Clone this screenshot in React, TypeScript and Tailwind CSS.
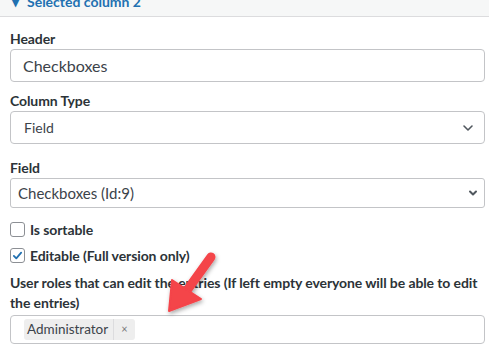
import React from 'react';

const font = { fontFamily: 'Lato, "Noto Sans", sans-serif' };

const Chevron = ({ className }: { className?: string }) => (
  <svg viewBox="0 0 16 16" className={className} fill="none" stroke="currentColor" strokeWidth="1.6" strokeLinecap="round" strokeLinejoin="round">
    <path d="M4 6l4 4 4-4" />
  </svg>
);

const App: React.FC = () => {
  return (
    <div className="relative w-[489px] h-[349px] overflow-hidden bg-white text-[#2c3338]" style={font}>
      <div className="h-[17px] bg-[#f6f7f7] border-b border-[#dcdcde] overflow-hidden">
        <div className="flex items-center gap-2 pl-[12px] -mt-[8px] text-[14px] leading-[20px] font-bold text-[#2271b1]">
          <span>▾</span>
          <span>Selected column 2</span>
        </div>
      </div>

      <div className="px-[10px] pr-[4px]">
        <label className="block mt-[12px] text-[14px] tracking-[-0.1px] font-bold leading-[20px] text-[#2c3338]">Header</label>
        <div className="h-[33px] border border-[#c3c4c7] rounded-[4px] flex items-center px-[12px] text-[16px] text-[#3c434a]">
          Checkboxes
        </div>

        <label className="block mt-[9px] text-[14px] tracking-[-0.1px] font-bold leading-[20px] text-[#2c3338]">Column Type</label>
        <div className="h-[33px] border border-[#c3c4c7] rounded-[4px] flex items-center justify-between pl-[13px] pr-[8px] text-[14px] text-[#3c434a]">
          <span>Field</span>
          <Chevron className="w-[16px] h-[16px] text-[#50575e]" />
        </div>

        <label className="block mt-[14px] text-[14px] tracking-[-0.1px] font-bold leading-[20px] text-[#2c3338]">Field</label>
        <div className="h-[30px] border border-[#c3c4c7] rounded-[3px] flex items-center justify-between pl-[7px] pr-[6px] text-[15px] text-[#3c434a]">
          <span>Checkboxes (Id:9)</span>
          <svg viewBox="0 0 10 10" className="w-[10px] h-[10px] text-[#50575e]" fill="none" stroke="currentColor" strokeWidth="2" strokeLinecap="round" strokeLinejoin="round">
            <path d="M2 3.5l3 3 3-3" />
          </svg>
        </div>

        <div className="mt-[13px] flex items-center gap-[5px] h-[16px]">
          <span className="w-[15px] h-[15px] border border-[#8c8f94] rounded-[3px] bg-white" />
          <span className="text-[14px] tracking-[-0.1px] font-bold text-[#2c3338]">Is sortable</span>
        </div>

        <div className="mt-[10px] flex items-center gap-[5px] h-[16px]">
          <span className="w-[15px] h-[15px] border border-[#8c8f94] rounded-[3px] bg-white flex items-center justify-center">
            <svg viewBox="0 0 16 16" className="w-[13px] h-[13px]" fill="none" stroke="#2271b1" strokeWidth="2.2" strokeLinecap="round" strokeLinejoin="round">
              <path d="M3.5 8.5l3 3 6-7" />
            </svg>
          </span>
          <span className="text-[14px] tracking-[-0.1px] font-bold text-[#2c3338]">Editable (Full version only)</span>
        </div>

        <label className="block mt-[10px] text-[14px] tracking-[-0.1px] font-bold leading-[20px] text-[#2c3338]">
          User roles that can edit the entries (If left empty everyone will be able to edit the entries)
        </label>
        <div className="mt-[2px] h-[29px] border border-[#c3c4c7] rounded-[4px] flex items-center pl-[13px]">
          <span className="flex items-center h-[21px] bg-[#eeeeee] rounded-[3px] text-[13.5px] text-[#3c434a]">
            <span className="pl-[3px] pr-[5px]">Administrator</span>
            <span className="border-l border-[#dcdcde] h-full flex items-center px-[7px] text-[11px] text-[#777]">×</span>
          </span>
        </div>
      </div>

      <svg className="absolute left-0 top-0 pointer-events-none" width="489" height="349" viewBox="0 0 489 349">
        <defs>
          <filter id="sh" x="-50%" y="-50%" width="200%" height="200%">
            <feDropShadow dx="1" dy="2" stdDeviation="2" floodColor="#000" floodOpacity="0.35" />
          </filter>
        </defs>
        <g filter="url(#sh)" fill="#f4444a" stroke="#f4444a">
          <line x1="211" y1="257" x2="188" y2="289" strokeWidth="9" strokeLinecap="round" />
          <polygon points="172,280 201,299 169,311" strokeWidth="2" strokeLinejoin="round" />
        </g>
      </svg>
    </div>
  );
};

export default App;
